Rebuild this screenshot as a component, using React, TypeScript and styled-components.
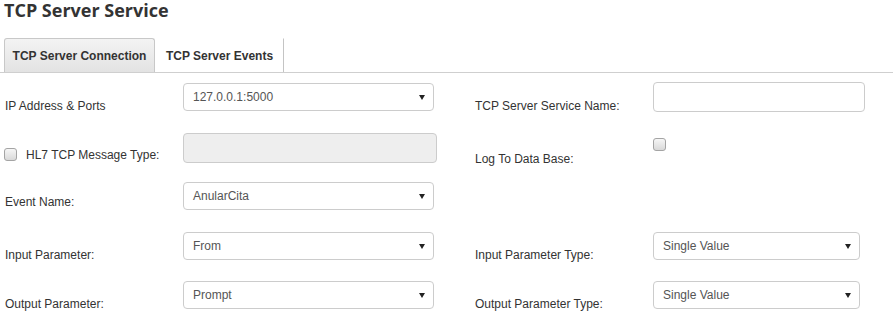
import React from "react";
import styled, { createGlobalStyle } from "styled-components";

const GlobalStyle = createGlobalStyle`
  html, body { margin: 0; padding: 0; background: #fff; }
  body { font-family: "Liberation Sans", Arial, sans-serif; font-size: 12px; color: #333; }
  * { box-sizing: border-box; }
`;

const Page = styled.div`
  width: 895px;
  height: 324px;
  overflow: hidden;
  background: #fff;
`;

const Title = styled.h1`
  margin: 0 0 18px 4px;
  font-family: "Open Sans", sans-serif;
  font-weight: 700;
  font-size: 18px;
  line-height: 20px;
  color: #333;
`;

const TabBar = styled.div`
  display: flex;
  align-items: flex-end;
  height: 35px;
  margin-right: 2px;
  border-bottom: 1px solid #cfcfcf;
`;

const Tab = styled.div<{ $active?: boolean; $width: number }>`
  width: ${(p) => p.$width}px;
  height: 34px;
  margin-left: ${(p) => (p.$active ? 4 : 0)}px;
  display: flex;
  align-items: center;
  justify-content: center;
  font-family: "Liberation Sans", Arial, sans-serif;
  font-weight: 700;
  font-size: 12px;
  color: #333;
  background: ${(p) =>
    p.$active ? "linear-gradient(#f3f3f3, #e3e3e3)" : "#fff"};
  border: 1px solid ${(p) => (p.$active ? "#c8c8c8" : "transparent")};
  border-right-color: ${(p) => (p.$active ? "#c8c8c8" : "#c4c4c4")};
  border-bottom: none;
  border-radius: ${(p) => (p.$active ? "3px 3px 0 0" : "0")};
`;

const Form = styled.div`
  display: grid;
  grid-template-columns: 183px 292px 178px 1fr;
  grid-auto-rows: 49.5px;
  padding-top: 10px;
`;

const Label = styled.div<{ $pad?: number; $indent?: number }>`
  display: flex;
  align-items: flex-start;
  gap: 9px;
  padding-top: ${(p) => p.$pad ?? 16}px;
  padding-left: ${(p) => p.$indent ?? 0}px;
  font-size: 12px;
  line-height: 14px;
  color: #333;
  white-space: nowrap;
`;

const Cell = styled.div`
  display: flex;
  align-items: flex-start;
`;

const Check = styled.span<{ $top?: number }>`
  display: inline-block;
  width: 13px;
  height: 13px;
  margin-top: ${(p) => p.$top ?? 0}px;
  border: 1px solid #a4a4a4;
  border-radius: 3px;
  background: linear-gradient(#f6f6f6, #d9d9d9);
  flex: none;
`;

const SelectBox = styled.div<{ $width: number }>`
  position: relative;
  width: ${(p) => p.$width}px;
  height: 28px;
  border: 1px solid #cccccc;
  border-radius: 4px;
  background: #fff;
  padding-left: 9px;
  display: flex;
  align-items: center;
  font-size: 12px;
  color: #555;
`;

const Arrow = styled.span`
  position: absolute;
  right: 8px;
  top: 11px;
  width: 0;
  height: 0;
  border-left: 3px solid transparent;
  border-right: 3px solid transparent;
  border-top: 5px solid #222;
`;

const TextBox = styled.div<{ $width: number; $disabled?: boolean }>`
  width: ${(p) => p.$width}px;
  height: 30px;
  margin-top: ${(p) => (p.$disabled ? 0 : -1)}px;
  border: 1px solid #cccccc;
  border-radius: 4px;
  background: ${(p) => (p.$disabled ? "#eeeeee" : "#fff")};
`;

const Select = ({ value, width }: { value: string; width: number }) => (
  <SelectBox $width={width}>
    {value}
    <Arrow />
  </SelectBox>
);

export default function App() {
  return (
    <Page>
      <GlobalStyle />
      <Title>TCP Server Service</Title>
      <TabBar>
        <Tab $active $width={151}>TCP Server Connection</Tab>
        <Tab $width={129}>TCP Server Events</Tab>
      </TabBar>
      <Form>
        <Label $indent={5}>IP Address &amp; Ports</Label>
        <Cell>
          <Select value="127.0.0.1:5000" width={251} />
        </Cell>
        <Label>TCP Server Service Name:</Label>
        <Cell>
          <TextBox $width={212} />
        </Cell>

        <Label $indent={4} $pad={15}>
          <Check />
          HL7 TCP Message Type:
        </Label>
        <Cell>
          <TextBox $width={254} $disabled />
        </Cell>
        <Label $pad={19}>Log To Data Base:</Label>
        <Cell>
          <Check $top={5} />
        </Cell>

        <Label $indent={5} $pad={13}>Event Name:</Label>
        <Cell>
          <Select value="AnularCita" width={251} />
        </Cell>
        <div />
        <div />

        <Label $indent={5}>Input Parameter:</Label>
        <Cell>
          <Select value="From" width={251} />
        </Cell>
        <Label>Input Parameter Type:</Label>
        <Cell>
          <Select value="Single Value" width={207} />
        </Cell>

        <Label $indent={5}>Output Parameter:</Label>
        <Cell>
          <Select value="Prompt" width={251} />
        </Cell>
        <Label>Output Parameter Type:</Label>
        <Cell>
          <Select value="Single Value" width={207} />
        </Cell>
      </Form>
    </Page>
  );
}
